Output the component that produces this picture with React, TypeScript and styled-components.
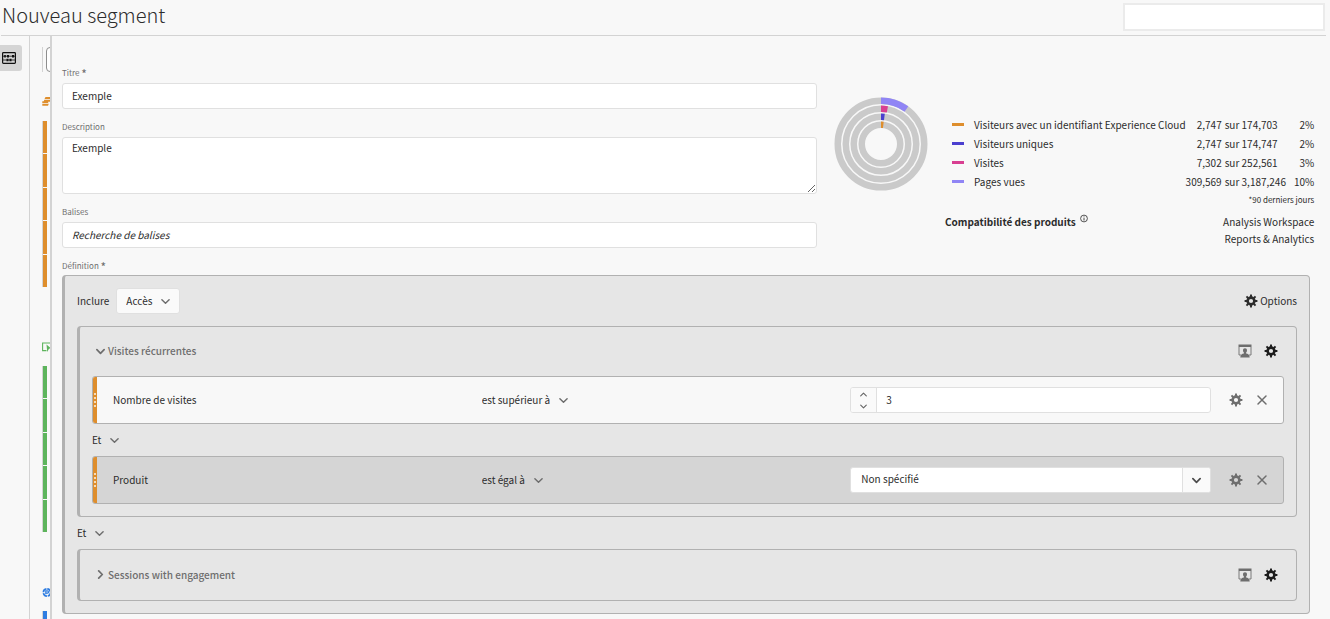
import React from "react";
import styled, { createGlobalStyle } from "styled-components";

const color = {
  page: "#f8f8f8",
  panel: "#e6e6e6",
  panelDark: "#d5d5d5",
  edge: "#b1b1b1",
  line: "#d3d3d3",
  fieldLine: "#e0e0e0",
  text: "#2c2c2c",
  muted: "#6e6e6e",
  orange: "#de8e2d",
  green: "#5db45c",
  blue: "#2f7de1",
  indigo: "#4b3fcf",
  pink: "#d83f91",
  violet: "#9085f5",
};

const GlobalStyle = createGlobalStyle`
  *, *::before, *::after { box-sizing: border-box; }
  body {
    margin: 0;
    background: ${color.page};
    color: ${color.text};
    font-family: "Noto Sans CJK JP", "Noto Sans", sans-serif;
    font-size: 10px;
    line-height: 16px;
  }
  button, input, textarea, select { font: inherit; color: inherit; margin: 0; }
  button { padding: 0; border: 0; background: none; cursor: pointer; }
  svg { display: block; flex: none; }
`;

const Page = styled.div`
  display: flex;
  flex-direction: column;
  height: 100vh;
  overflow: hidden;
`;

const Header = styled.header`
  display: flex;
  align-items: center;
  justify-content: space-between;
  flex: none;
  height: 36px;
  margin: 0 4px 0 1px;
  padding: 0 1px 2px;
  border-bottom: 1px solid ${color.line};
`;

const PageTitle = styled.h1`
  margin: 0;
  padding-bottom: 4px;
  font-size: 20px;
  line-height: 28px;
  font-weight: 300;
`;

const HeaderInput = styled.input`
  width: 202px;
  height: 28px;
  padding: 0 8px;
  border: 2px solid #ebebeb;
  background: #fff;
`;

const Body = styled.div`
  display: flex;
  flex: 1;
  min-height: 0;
`;

const Rail = styled.nav`
  flex: none;
  width: 30px;
  padding-top: 9px;
  border-right: 1px solid ${color.line};
`;

const RailButton = styled.button`
  display: flex;
  align-items: center;
  width: 22px;
  height: 26px;
  padding-left: 2px;
  border-radius: 0 3px 3px 0;
  background: ${color.panelDark};
`;

const Components = styled.aside`
  flex: none;
  width: 22px;
  padding: 11px 0 0 12px;
  border-right: 2px solid ${color.line};
  overflow: hidden;
`;

const ComponentSearch = styled.div`
  width: 160px;
  height: 25px;
  margin-bottom: 25px;
  padding-left: 3px;
  border-left: 1px solid ${color.line};
`;

const ComponentSearchInput = styled.input`
  display: block;
  width: 100%;
  height: 25px;
  border: 1px solid #8e8e8e;
  border-radius: 4px;
  background: #fff;
`;

const ComponentGroup = styled.div`
  width: 160px;
  margin-bottom: 55px;
`;

const ComponentList = styled.div`
  display: flex;
  flex-direction: column;
  gap: 1px;
  height: 166px;
  margin-top: 14px;
  border-left: 1px solid ${color.line};
`;

const ComponentItem = styled.div<{ $tone: string }>`
  flex: 1;
  border-left: 4px solid ${(p) => p.$tone};
`;

const Main = styled.main`
  flex: 1;
  min-width: 0;
  padding: 19px 16px 5px 10px;
`;

const Overview = styled.div`
  display: flex;
  gap: 17px;
`;

const Form = styled.div`
  flex: 1;
  min-width: 0;
`;

const labelText = `
  display: block;
  margin: 0;
  font-size: 8px;
  line-height: 16px;
  font-weight: 400;
  color: ${color.muted};
`;

const Label = styled.label`
  ${labelText}
  padding: 10px 0 2px;
`;

const DefinitionTitle = styled.h2`
  ${labelText}
  padding: 10px 0 1px;
`;

const Required = styled.span`
  font-size: 12px;
  line-height: 8px;
  vertical-align: sub;
`;

const TextInput = styled.input`
  display: block;
  width: 100%;
  height: 26px;
  padding: 0 9px 2px;
  border: 1px solid ${color.fieldLine};
  border-radius: 3px;
  background: #fff;
  &::placeholder { color: ${color.text}; font-style: italic; opacity: 1; }
`;

const TextArea = styled.textarea`
  display: block;
  width: 100%;
  height: 57px;
  padding: 2px 9px;
  border: 1px solid ${color.fieldLine};
  border-radius: 3px;
  background: #fff;
  resize: vertical;
`;

const Summary = styled.section`
  display: flex;
  gap: 17px;
  flex: none;
  width: 480px;
  padding-top: 42px;
`;

const Legend = styled.div`
  flex: 1;
  padding-top: 18px;
`;

const Stats = styled.table`
  width: 100%;
  border-collapse: collapse;
  line-height: 19px;
  th, td { padding: 0; font-weight: 400; text-align: left; white-space: nowrap; }
`;

const StatName = styled.th`
  width: 100%;
`;

const StatNameContent = styled.span`
  display: flex;
  align-items: center;
  gap: 10px;
  padding-left: 7px;
`;

const Swatch = styled.span<{ $tone: string }>`
  width: 12px;
  height: 3px;
  background: ${(p) => p.$tone};
`;

const StatCount = styled.td`
  && { text-align: right; }
`;

const StatTotal = styled.td`
  && { padding-left: 3px; }
`;

const StatPercent = styled.td`
  && { padding-left: 8px; text-align: right; }
`;

const Note = styled.p`
  margin: 0;
  font-size: 8px;
  line-height: 18px;
  text-align: right;
`;

const Compatibility = styled.div`
  display: flex;
  justify-content: space-between;
  margin-top: 4px;
  line-height: 17px;
`;

const CompatibilityTitle = styled.h2`
  display: flex;
  gap: 4px;
  margin: 0;
  font-size: 10px;
  line-height: 17px;
  font-weight: 700;
`;

const Products = styled.ul`
  margin: 0;
  padding: 0;
  list-style: none;
  text-align: right;
`;

const Definition = styled.section`
  margin-right: 4px;
  padding: 12px;
  border: 1px solid ${color.edge};
  border-left-width: 3px;
  border-radius: 4px;
  background: ${color.panel};
`;

const Toolbar = styled.div`
  display: flex;
  align-items: center;
  justify-content: space-between;
  height: 26px;
  margin-bottom: 12px;
`;

const Inline = styled.div<{ $gap: number }>`
  display: flex;
  align-items: center;
  gap: ${(p) => p.$gap}px;
`;

const OptionsButton = styled.button`
  display: flex;
  align-items: center;
  gap: 2px;
`;

const Group = styled.section`
  display: flex;
  flex-direction: column;
  justify-content: center;
  min-height: 52px;
  padding: 0 12px;
  border: 1px solid ${color.edge};
  border-left-width: 3px;
  border-radius: 4px;
`;

const GroupHeader = styled.header`
  display: flex;
  align-items: center;
  justify-content: space-between;
  height: 49px;
  padding: 0 6px 1px 4px;
`;

const GroupToggle = styled.button`
  display: flex;
  align-items: center;
  gap: 3px;
  font-weight: 500;
  color: ${color.muted};
`;

const IconButton = styled.button<{ $muted?: boolean }>`
  display: flex;
  color: ${(p) => (p.$muted ? color.muted : "#1c1c1c")};
`;

const Rules = styled.div`
  padding-bottom: 12px;
`;

const Rule = styled.div<{ $dark?: boolean }>`
  display: flex;
  align-items: center;
  height: 48px;
  border: 1px solid ${color.edge};
  border-radius: 3px;
  background: ${(p) => (p.$dark ? color.panelDark : color.page)};
  overflow: hidden;
`;

const Handle = styled.div`
  display: flex;
  flex-direction: column;
  align-items: center;
  justify-content: center;
  align-self: stretch;
  gap: 2px;
  width: 4px;
  margin-right: 16px;
  background: ${color.orange};
`;

const HandleDot = styled.span`
  width: 2px;
  height: 2px;
  background: #f6dcbb;
`;

const RuleFields = styled.div`
  display: grid;
  grid-template-columns: repeat(3, 1fr);
  align-items: center;
  flex: 1;
`;

const RuleActions = styled.div`
  display: flex;
  align-items: center;
  gap: 13px;
  width: 64px;
  padding-left: 10px;
`;

const Connector = styled.div`
  display: flex;
  align-items: center;
  height: 32px;
`;

const PickerBox = styled.span<{ $boxed?: boolean }>`
  display: inline-grid;
  align-items: center;
  justify-items: end;
  color: ${color.text};
  ${(p) =>
    p.$boxed &&
    `
    height: 26px;
    padding: 0 9px;
    border: 1px solid ${color.fieldLine};
    border-radius: 3px;
    background: #fafafa;
  `}
  > * { grid-area: 1 / 1; }
  > svg { pointer-events: none; color: ${color.muted}; }
`;

const PickerSelect = styled.select`
  && { color: inherit; }
  appearance: none;
  padding: 0 17px 0 0;
  border: 0;
  background: none;
`;

const ValueBox = styled.div`
  display: flex;
  height: 26px;
  margin-right: 8px;
  border: 1px solid ${color.fieldLine};
  border-radius: 3px;
  background: #fff;
  overflow: hidden;
`;

const Stepper = styled.div`
  display: flex;
  flex-direction: column;
  width: 26px;
  border-right: 1px solid ${color.fieldLine};
  background: #fafafa;
`;

const StepButton = styled.button`
  display: flex;
  flex: 1;
  align-items: center;
  justify-content: center;
  color: #666;
`;

const ValueInput = styled.input`
  flex: 1;
  min-width: 0;
  padding: 0 9px;
  border: 0;
  background: none;
`;

const Combo = styled(ValueBox)`
  display: grid;
  grid-template-columns: 1fr 28px;
`;

const ComboSelect = styled.select`
  grid-area: 1 / 1 / 2 / 3;
  appearance: none;
  padding: 0 10px 2px;
  border: 0;
  background: none;
`;

const ComboArrow = styled.span`
  grid-area: 1 / 2;
  display: flex;
  align-items: center;
  justify-content: center;
  border-left: 1px solid ${color.fieldLine};
  background: #fafafa;
  color: #4b4b4b;
  pointer-events: none;
`;

function Chevron({ dir = "down", size = 9, weight = 1.6 }: { dir?: "down" | "up" | "right"; size?: number; weight?: number }) {
  const d = { down: "M1 3 5 7 9 3", up: "M1 7 5 3 9 7", right: "M3 1 7 5 3 9" }[dir];
  return (
    <svg width={size} height={size} viewBox="0 0 10 10" fill="none" stroke="currentColor" strokeWidth={weight} aria-hidden="true">
      <path d={d} strokeLinecap="round" strokeLinejoin="round" />
    </svg>
  );
}

function Gear({ size = 14 }: { size?: number }) {
  return (
    <svg width={size} height={size} viewBox="-7 -7 14 14" fill="currentColor" aria-hidden="true">
      <circle r="3.4" fill="none" stroke="currentColor" strokeWidth="2.600" />
      {[0, 45, 90, 135, 180, 225, 270, 315].map((a) => (
        <path key={a} d="M-1.1 -4 -.9 -6.400H.9L1.100 -4Z" transform={`rotate(${a})`} />
      ))}
    </svg>
  );
}

function Cross() {
  return (
    <svg width="12" height="12" viewBox="0 0 12 12" fill="none" stroke="currentColor" strokeWidth="1.5" aria-hidden="true">
      <path d="M2 2l8 8M10 2l-8 8" strokeLinecap="round" />
    </svg>
  );
}

function VisitorContainer() {
  return (
    <svg width="14" height="14" viewBox="0 0 14 14" fill="currentColor" aria-hidden="true">
      <path d="M.5 .5h13V3H.5z" />
      <path d="M1 3v8h2M13 3v8h-2" fill="none" stroke="currentColor" strokeWidth=".9" />
      <path d="M7 4.300c1.300 0 2 .9 2 2.100 0 .9-.4 1.700-.9 2.200v1c1.800.3 3.600 1.300 3.600 3.800H2.300c0-2.500 1.800-3.500 3.600-3.800v-1C5.400 8.100 5 7.300 5 6.400c0-1.200.7-2.100 2-2.100z" />
    </svg>
  );
}

function Abacus() {
  return (
    <svg width="14" height="12" viewBox="0 0 14 12" aria-hidden="true">
      <rect x=".6" y=".6" width="12.800" height="10.800" rx=".8" fill="none" stroke="#111" strokeWidth="1.200" />
      <path d="M1 4.200h12M1 8h12" stroke="#111" strokeWidth=".8" />
      <path d="M2.200 3h1.600v2.400H2.200zM5 3h2v2.400H5zM10 3h2v2.400h-2zM4.500 6.800h2v2.400h-2zM7.500 6.800h2v2.400h-2z" fill="#111" />
    </svg>
  );
}

function DimensionIcon() {
  return (
    <svg width="10" height="10" viewBox="0 0 10 10" fill={color.orange} aria-hidden="true">
      <path d="M3.500 0H10v2H2.500zM2.300 2.700h6.200v2H1.600zM.3 4.200h5.900v1.900H.3zM.3 6.800h6.500L6 8.800H.3z" />
    </svg>
  );
}

function MetricIcon() {
  return (
    <svg width="10" height="10" viewBox="0 0 10 10" aria-hidden="true">
      <path d="M4.500 8.600H.6V1h8.800" fill="none" stroke={color.green} strokeWidth="1.100" />
      <path d="M4.500 2.500 9 6.300 7 6.800 5.200 10z" fill={color.green} />
    </svg>
  );
}

function SegmentIcon() {
  return (
    <svg width="10" height="10" viewBox="0 0 10 10" fill="none" stroke={color.blue} aria-hidden="true">
      <circle cx="5" cy="5.500" r="3.600" strokeWidth="1.700" strokeDasharray="4.800 .8" />
      <path d="M3.800 7.200V3.900h1.600a1 1 0 0 1 0 2.200H3.800" strokeWidth="1.200" />
    </svg>
  );
}

function InfoIcon() {
  return (
    <svg width="8" height="10" viewBox="0 0 8 10" fill="none" stroke={color.text} aria-hidden="true">
      <circle cx="4" cy="5.500" r="3.400" strokeWidth=".8" />
      <path d="M4 5.100v2.400M4 3.500v.9" strokeWidth=".9" />
    </svg>
  );
}

const rings = [
  { radius: 43.25, tone: color.violet, share: 0.1 },
  { radius: 35.25, tone: color.pink, share: 0.029 },
  { radius: 27.25, tone: color.indigo, share: 0.02 },
  { radius: 19.25, tone: color.orange, share: 0.02 },
];

function RingChart() {
  return (
    <svg width="94" height="94" viewBox="-47 -47 94 94" fill="none" strokeWidth="6.5" role="img" aria-label="Aperçu du segment">
      {rings.map((r) => (
        <g key={r.radius}>
          <circle r={r.radius} stroke="#cacaca" />
          <circle r={r.radius} stroke={r.tone} pathLength={1} strokeDasharray={`${r.share} 1`} transform="rotate(-90)" />
        </g>
      ))}
    </svg>
  );
}

function Picker({ label, value, boxed }: { label: string; value: string; boxed?: boolean }) {
  return (
    <PickerBox $boxed={boxed}>
      <PickerSelect aria-label={label} defaultValue={value}>
        <option>{value}</option>
      </PickerSelect>
      <Chevron />
    </PickerBox>
  );
}

function RuleRow({ name, operator, dark, children }: { name: string; operator: string; dark?: boolean; children: React.ReactNode }) {
  return (
    <Rule $dark={dark}>
      <Handle>
        {[0, 1, 2, 3].map((i) => (
          <HandleDot key={i} />
        ))}
      </Handle>
      <RuleFields>
        <span>{name}</span>
        <div>
          <Picker label={`Opérateur ${name}`} value={operator} />
        </div>
        {children}
      </RuleFields>
      <RuleActions>
        <IconButton $muted aria-label="Paramètres">
          <Gear />
        </IconButton>
        <IconButton $muted aria-label="Supprimer">
          <Cross />
        </IconButton>
      </RuleActions>
    </Rule>
  );
}

function GroupHead({ title, open }: { title: string; open: boolean }) {
  return (
    <GroupHeader>
      <GroupToggle aria-expanded={open}>
        <Chevron dir={open ? "down" : "right"} weight={1.9} />
        {title}
      </GroupToggle>
      <Inline $gap={12}>
        <IconButton $muted aria-label="Conteneur">
          <VisitorContainer />
        </IconButton>
        <IconButton aria-label="Paramètres">
          <Gear />
        </IconButton>
      </Inline>
    </GroupHeader>
  );
}

const stats = [
  { name: "Visiteurs avec un identifiant Experience Cloud", tone: color.orange, count: "2,747", total: "174,703", percent: "2%" },
  { name: "Visiteurs uniques", tone: color.indigo, count: "2,747", total: "174,747", percent: "2%" },
  { name: "Visites", tone: color.pink, count: "7,302", total: "252,561", percent: "3%" },
  { name: "Pages vues", tone: color.violet, count: "309,569", total: "3,187,246", percent: "10%" },
];

const componentGroups = [
  { tone: color.orange, icon: <DimensionIcon /> },
  { tone: color.green, icon: <MetricIcon /> },
  { tone: color.blue, icon: <SegmentIcon /> },
];

export default function App() {
  return (
    <>
      <GlobalStyle />
      <Page>
        <Header>
          <PageTitle>Nouveau segment</PageTitle>
          <HeaderInput aria-label="Suite de rapports" />
        </Header>
        <Body>
          <Rail>
            <RailButton aria-label="Composants">
              <Abacus />
            </RailButton>
          </Rail>
          <Components>
            <ComponentSearch>
              <ComponentSearchInput aria-label="Rechercher" />
            </ComponentSearch>
            {componentGroups.map((g) => (
              <ComponentGroup key={g.tone}>
                {g.icon}
                <ComponentList>
                  {[0, 1, 2, 3, 4].map((i) => (
                    <ComponentItem key={i} $tone={g.tone} />
                  ))}
                </ComponentList>
              </ComponentGroup>
            ))}
          </Components>
          <Main>
            <Overview>
              <Form>
                <Label htmlFor="titre">
                  Titre <Required>*</Required>
                </Label>
                <TextInput id="titre" defaultValue="Exemple" />
                <Label htmlFor="description">Description</Label>
                <TextArea id="description" defaultValue="Exemple" />
                <Label htmlFor="balises">Balises</Label>
                <TextInput id="balises" placeholder="Recherche de balises" />
              </Form>
              <Summary>
                <RingChart />
                <Legend>
                  <Stats>
                    <tbody>
                      {stats.map((s) => (
                        <tr key={s.name}>
                          <StatName scope="row">
                            <StatNameContent>
                              <Swatch $tone={s.tone} />
                              {s.name}
                            </StatNameContent>
                          </StatName>
                          <StatCount>{s.count}</StatCount>
                          <StatTotal>sur {s.total}</StatTotal>
                          <StatPercent>{s.percent}</StatPercent>
                        </tr>
                      ))}
                    </tbody>
                  </Stats>
                  <Note>*90 derniers jours</Note>
                  <Compatibility>
                    <CompatibilityTitle>
                      Compatibilité des produits
                      <InfoIcon />
                    </CompatibilityTitle>
                    <Products>
                      <li>Analysis Workspace</li>
                      <li>Reports &amp; Analytics</li>
                    </Products>
                  </Compatibility>
                </Legend>
              </Summary>
            </Overview>
            <DefinitionTitle>
              Définition <Required>*</Required>
            </DefinitionTitle>
            <Definition>
              <Toolbar>
                <Inline $gap={7}>
                  <span>Inclure</span>
                  <Picker label="Inclure" value="Accès" boxed />
                </Inline>
                <OptionsButton>
                  <Gear />
                  Options
                </OptionsButton>
              </Toolbar>
              <Group>
                <GroupHead title="Visites récurrentes" open />
                <Rules>
                  <RuleRow name="Nombre de visites" operator="est supérieur à">
                    <ValueBox>
                      <Stepper>
                        <StepButton aria-label="Augmenter">
                          <Chevron dir="up" size={7} />
                        </StepButton>
                        <StepButton aria-label="Diminuer">
                          <Chevron size={7} />
                        </StepButton>
                      </Stepper>
                      <ValueInput aria-label="Nombre de visites" defaultValue="3" />
                    </ValueBox>
                  </RuleRow>
                  <Connector>
                    <Picker label="Connecteur" value="Et" />
                  </Connector>
                  <RuleRow name="Produit" operator="est égal à" dark>
                    <Combo>
                      <ComboSelect aria-label="Produit" defaultValue="Non spécifié">
                        <option>Non spécifié</option>
                      </ComboSelect>
                      <ComboArrow>
                        <Chevron weight={1.9} />
                      </ComboArrow>
                    </Combo>
                  </RuleRow>
                </Rules>
              </Group>
              <Connector>
                <Picker label="Connecteur" value="Et" />
              </Connector>
              <Group>
                <GroupHead title="Sessions with engagement" open={false} />
              </Group>
            </Definition>
          </Main>
        </Body>
      </Page>
    </>
  );
}
